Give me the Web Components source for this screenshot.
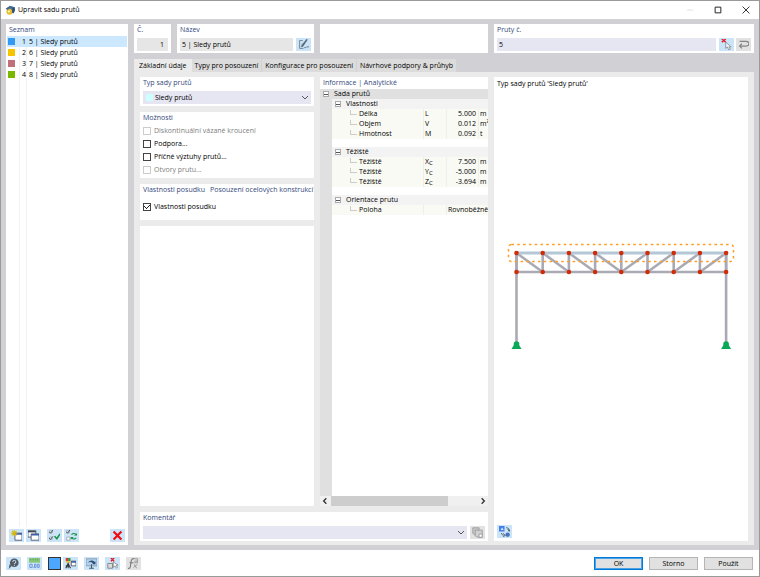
<!DOCTYPE html>
<html lang="cs">
<head>
<meta charset="utf-8">
<title>Upravit sadu prutů</title>
<style>
  body {
    margin: 0;
    font: 7px/10px "Open Sans", "Noto Sans", sans-serif;
    color: #000;
    --accent: #34497c;
    --field: #e6e6f2;
    --frame: #d0d0d5;
    --page: #ebebeb;
    --button: #cce4f7;
  }
</style>
</head>
<body>
<member-set-dialog></member-set-dialog>

<script>
const ICONS = {
  app: '<circle cx="6.500" cy="9" r="4.500" fill="#e5bd35"/><path d="M1 5l6-4 7 2v5l-2 4-2-1V7L7 5 3 7z" fill="#41698f"/><path d="M11 4l2 1-1 6-2-1z" fill="#24496d"/><circle cx="5.500" cy="9" r="1.500" fill="#fff3ad"/>',
  minimize: '<path d="M2 7h10" stroke="#c9c9c9"/>',
  maximize: '<path d="M2 2h10v10H2z" fill="none" stroke="#222" stroke-width="1.700"/>',
  close: '<path d="M1 1l12 12M13 1L1 13" stroke="#222" stroke-width="1.600"/>',
  edit: '<path d="M6 2H2v10h5" fill="none" stroke="#63727e"/><path d="M4 8l2-3M4 10h2l6-9-1-1-6 8z" fill="#506574" stroke="#506574" stroke-width=".5"/><path d="M8 11h2l1-1h3" fill="none" stroke="#506574"/>',
  pick: '<path d="M1 0l5 4M6 0L1 4" stroke="#e01b24" stroke-width="1.800"/><path d="M6 4v8l2-2 2 4 2-1-2-3h3z" fill="#f4f7fa" stroke="#777f88" stroke-width=".9"/>',
  back: '<path d="M2 3h8q4 0 4 3t-4 3H2M5 6L2 9l3 3" fill="none" stroke="#858585" stroke-width="1.500"/>',
  create: '<path d="M5 4h9v9H5z" fill="#fff" stroke="#3e4557"/><path d="M5 5h9" stroke="#3b5ca8" stroke-width="2"/><path d="M4 0v8M0 4h8M1 1l6 6M7 1L1 7" stroke="#d8b800" stroke-width="1.300"/>',
  copy: '<path d="M0 1h10v8H0z" fill="#fff" stroke="#3e4557"/><path d="M0 2h10" stroke="#3e4557" stroke-width="2"/><path d="M4 5h10v8H4z" fill="#fff" stroke="#3e4557"/><path d="M4 6h10" stroke="#3b5ca8" stroke-width="2"/>',
  checkAll: '<path d="M1 1h3v3H1zM1 9h3v3H1z" fill="#fff" stroke="#77838d" stroke-width=".7"/><path d="M0 2l2 2 3-4M0 10l2 2 3-4" fill="none" stroke="#333"/><path d="M7 8l3 3 4-6" fill="none" stroke="#159447" stroke-width="2"/>',
  invert: '<path d="M1 1h3v3H1zM1 9h4v4H1z" fill="#fff" stroke="#77838d" stroke-width=".7"/><path d="M0 2l2 2 3-4" fill="none" stroke="#333"/><path d="M7 6q3-3 6 0M13 10q-3 3-6 0" fill="none" stroke="#159447" stroke-width="1.400"/><path d="M14 4v3h-4zM6 12V9h4z" fill="#159447"/>',
  remove: '<path d="M2 2l10 10M12 2L2 12" stroke="#ef0b12" stroke-width="2.800"/>',
  pages: '<path d="M1 1h8v9H3L1 8z" fill="#c9c9c9" stroke="#929292"/><path d="M4 4h9v9H7l-3-2z" fill="#d0d0d0" stroke="#929292"/><path d="M9 9h4v4H9z" fill="#fff" stroke="#929292"/>',
  swap: '<path d="M0 0h7v7H0z" fill="#437fea"/><path d="M2 5l2-3 2 3z" fill="#d9eaff"/><circle cx="11" cy="11" r="2.800" fill="#4474bd"/><path d="M9 2q4 0 4 4M11 4l2 3 1-3M3 9q0 3 4 3M5 9l3 3-3 2" fill="none" stroke="#445466"/>',
  help: '<circle cx="8" cy="6" r="5.500" fill="#4f5a64"/><path d="M5 10l-4 4 1-6z" fill="#4f5a64"/><path d="M6 5q0-2 2-2t2 2-2 2v1M8 9v1" fill="none" stroke="#d7e7f3" stroke-width="1.200"/>',
  units: '<path d="M0 0h14v6H0z" fill="#88c979"/><path d="M2 1v2M5 1v2M8 1v2M11 1v2" stroke="#4e8849" stroke-width=".7"/><path d="M1 8h3v4H1zM7 8h2v4H7zM11 8h2v4h-2z" fill="none" stroke="#5b86d8"/><path d="M5 12h1" stroke="#5b86d8"/>',
  display: '<path d="M1 0h3v4H1z" fill="#db372e"/><path d="M4 0h3v4H4z" fill="#2d9b41"/><path d="M1 4h6v2H1z" fill="#ebc334"/><path d="M4 6v7M1 13l3-6 3 6M1 10h5" fill="none" stroke="#30363c" stroke-width="1.400"/><path d="M8 4h6v6H8z" fill="#fff" stroke="#3e4557"/><path d="M8 5h6" stroke="#3b5ca8" stroke-width="2"/>',
  view: '<path d="M0 1h14v9H0z" fill="#b4d2ea" stroke="#7d93a8"/><path d="M7 8v5M4 13h6" stroke="#42596e" stroke-width="1.300"/><path d="M2 6q5-5 9-1l1-1v4H8l1-1Q6 4 2 6z" fill="#294b75"/>',
  deselect: '<path d="M5 0l4 4M9 0L5 4" stroke="#e01b24" stroke-width="1.800"/><path d="M1 7h6v6H1z" fill="#ddd" stroke="#777"/><path d="M8 5v7l2-2 2 3 1-1-1-3h2z" fill="#fff" stroke="#777" stroke-width=".9"/>',
  formula: '<path d="M8 1Q5 0 4 4L3 11q-1 3-3 2M2 6h5" fill="none" stroke="#7b7b7b" stroke-width="1.400"/><path d="M8 1h4v5H8M8 4h4M7 12l5-4M8 8l3 5" fill="none" stroke="#8b8b8b"/>',
};

const svg = name => `<svg viewBox="0 0 14 14" aria-hidden="true">${ICONS[name]}</svg>`;
const CHEVRON = '<svg class="chevron" viewBox="0 0 8 8" aria-hidden="true"><path d="M1 2l3 3 3-3" fill="none" stroke="#555"/></svg>';

const FIELD_STYLE = `
  .row {
    display: flex;
    align-items: center;
    gap: 3px;
    height: 13px;
  }
  input, select {
    flex: 1;
    min-width: 0;
    width: 0;
    height: 13px;
    padding: 0 2px;
    border: 0;
    border-radius: 0;
    box-sizing: border-box;
    background: var(--field);
    color: inherit;
    font: inherit;
    appearance: none;
  }
  input[readonly] { background: #e6e6e6; }
  .combo {
    display: flex;
    flex: 1;
    align-items: center;
    height: 13px;
    padding: 0 2px 0 3px;
    background: var(--field);
  }
  .chevron { width: 8px; height: 8px; pointer-events: none; }
`;

function define(name, styles, markup, setup) {
  customElements.define(name, class extends HTMLElement {
    constructor() {
      super();
      this.attachShadow({ mode: 'open' });
    }

    connectedCallback() {
      const html = typeof markup === 'function' ? markup(this) : markup;
      this.shadowRoot.innerHTML = `<style>${styles}</style>${html}`;
      if (setup) setup(this.shadowRoot, this);
    }
  });
}

define('icon-button', `
  :host { display: block; flex: none; width: 15px; height: 13px; }
  button {
    display: flex;
    align-items: center;
    justify-content: center;
    width: 100%;
    height: 100%;
    padding: 0;
    border: 0;
    background: var(--button);
  }
  :host([plain]) button { background: none; }
  :host([plain]) svg { width: 8px; height: 8px; }
  button:disabled { background: #e2e2e2; }
  svg { width: 11px; height: 11px; }
`, el => `
  <button type="button" aria-label="${el.getAttribute('label')}" ${el.hasAttribute('off') ? 'disabled' : ''}>
    ${svg(el.getAttribute('icon'))}
  </button>
`);

define('panel-card', `
  :host {
    display: flex;
    flex-direction: column;
    box-sizing: border-box;
    min-width: 0;
    padding: 0 3px 2px;
    background: #fff;
  }
  .heading {
    display: flex;
    gap: 5px;
    height: 12px;
    margin-bottom: 2px;
    line-height: 12px;
    color: var(--accent);
    white-space: nowrap;
  }
`, '<div class="heading"><slot name="heading"></slot></div><slot></slot>');

define('title-bar', `
  :host { display: flex; align-items: center; height: 18px; padding: 0 6px 0 4px; background: #fff; }
  svg { width: 10px; height: 10px; }
  h1 { flex: 1; margin: 0 0 0 3px; font-size: 7px; font-weight: 400; }
  nav { display: flex; gap: 13px; }
`, `
  ${svg('app')}
  <h1><slot></slot></h1>
  <nav>
    <icon-button plain icon="minimize" label="Minimalizovat"></icon-button>
    <icon-button plain icon="maximize" label="Maximalizovat"></icon-button>
    <icon-button plain icon="close" label="Zavřít"></icon-button>
  </nav>
`);

const MEMBER_SETS = [
  ['#3399f3', 1, '5 | Sledy prutů'],
  ['#f7c400', 2, '6 | Sledy prutů'],
  ['#c07078', 3, '7 | Sledy prutů'],
  ['#7ab800', 4, '8 | Sledy prutů'],
];

define('member-set-list', `
  :host { display: flex; flex-direction: column; padding: 0 0 3px; background: #fff; }
  h2 { margin: 0; padding-left: 3px; font-size: 7px; line-height: 12px; font-weight: 400; color: var(--accent); }
  ul {
    flex: 1;
    margin: 0 1px;
    padding: 0;
    list-style: none;
    background: linear-gradient(90deg, #0000 12px, #f2f2f2 12px 13px, #0000 13px 19px, #f2f2f2 19px 20px, #0000 20px);
  }
  li { display: flex; align-items: center; height: 11px; padding-left: 1px; white-space: nowrap; }
  li.selected { background: #cce8ff; }
  i { width: 7px; height: 7px; }
  .number { width: 11px; text-align: right; }
  .name { margin-left: 3px; }
  footer { display: flex; gap: 2px; padding: 2px 3px 0; }
  .gap { width: 2px; }
  .spacer { flex: 1; }
`, `
  <h2>Seznam</h2>
  <ul>${MEMBER_SETS.map(([color, number, name], i) => `
    <li class="${i === 0 ? 'selected' : ''}">
      <i style="background:${color}"></i><span class="number">${number}</span><span class="name">${name}</span>
    </li>`).join('')}
  </ul>
  <footer>
    <icon-button icon="create" label="Nová"></icon-button>
    <icon-button icon="copy" label="Kopírovat"></icon-button>
    <span class="gap"></span>
    <icon-button icon="checkAll" label="Vybrat vše"></icon-button>
    <icon-button icon="invert" label="Invertovat výběr"></icon-button>
    <span class="spacer"></span>
    <icon-button icon="remove" label="Smazat"></icon-button>
  </footer>
`);

define('set-header', `
  :host { display: grid; grid-template-columns: 37px 137px 168px minmax(0, 1fr); gap: 6px; height: 29px; }
  #number { text-align: right; padding-right: 4px; }
  .actions { display: flex; gap: 2px; }
  ${FIELD_STYLE}
`, `
  <panel-card>
    <label slot="heading" for="number">Č.</label>
    <div class="row"><input id="number" value="1" readonly></div>
  </panel-card>
  <panel-card>
    <label slot="heading" for="name">Název</label>
    <div class="row">
      <input id="name" value="5 | Sledy prutů" readonly>
      <icon-button icon="edit" label="Upravit název"></icon-button>
    </div>
  </panel-card>
  <panel-card></panel-card>
  <panel-card>
    <label slot="heading" for="members">Pruty č.</label>
    <div class="row">
      <input id="members" value="5">
      <div class="actions">
        <icon-button icon="pick" label="Vybrat pruty"></icon-button>
        <icon-button off icon="back" label="Obrátit orientaci"></icon-button>
      </div>
    </div>
  </panel-card>
`);

define('tab-strip', `
  :host { display: flex; height: 13px; }
  button {
    padding: 0 3px;
    border: 0;
    border-right: 1px solid #d2d2d4;
    background: #dcdcdc;
    color: inherit;
    font: inherit;
    white-space: nowrap;
  }
  button[aria-selected="true"] { border: 0; padding: 0 5px; background: var(--page); }
`, `
  <button type="button" role="tab" aria-selected="true">Základní údaje</button>
  <button type="button" role="tab" aria-selected="false">Typy pro posouzení</button>
  <button type="button" role="tab" aria-selected="false">Konfigurace pro posouzení</button>
  <button type="button" role="tab" aria-selected="false">Návrhové podpory &amp; průhyb</button>
`, root => {
  const tabs = root.querySelectorAll('button');
  tabs.forEach(tab => tab.addEventListener('click', () => {
    tabs.forEach(t => t.setAttribute('aria-selected', t === tab));
  }));
});

define('check-option', `
  :host { display: block; height: 13px; }
  label { display: flex; align-items: center; gap: 3px; height: 13px; white-space: nowrap; }
  input {
    flex: none;
    width: 8px;
    height: 8px;
    margin: 0;
    border: 1px solid #444;
    box-sizing: border-box;
    background: #fff;
    appearance: none;
  }
  input:checked {
    background:
      linear-gradient(45deg, #0000 45%, #222 45% 60%, #0000 60%) 0 2px / 3px 3px no-repeat,
      linear-gradient(-45deg, #0000 42%, #222 42% 62%, #0000 62%) 2px 1px / 4px 4px no-repeat;
  }
  :host([off]) { color: #808080; }
  :host([off]) input { border-color: #ccc; }
`, el => `
  <label>
    <input type="checkbox" ${el.hasAttribute('on') ? 'checked' : ''} ${el.hasAttribute('off') ? 'disabled' : ''}>
    <span><slot></slot></span>
  </label>
`);

define('basic-options', `
  :host { display: flex; flex-direction: column; gap: 6px; min-width: 0; }
  .swatch { width: 7px; height: 7px; background: #ccffff; }
  .options { height: 66px; }
  .options .list { margin-top: -2px; }
  .design { height: 36px; }
  .design check-option { margin-top: 2px; }
  .rest { flex: 1; }
  ${FIELD_STYLE}
`, `
  <panel-card>
    <label slot="heading" for="type">Typ sady prutů</label>
    <div class="combo">
      <span class="swatch"></span>
      <select id="type"><option>Sledy prutů</option></select>
      ${CHEVRON}
    </div>
  </panel-card>
  <panel-card class="options">
    <span slot="heading">Možnosti</span>
    <div class="list">
      <check-option off>Diskontinuální vázané kroucení</check-option>
      <check-option>Podpora...</check-option>
      <check-option>Příčné výztuhy prutů...</check-option>
      <check-option off>Otvory prutu...</check-option>
    </div>
  </panel-card>
  <panel-card class="design">
    <span slot="heading">Vlastnosti posudku</span>
    <span slot="heading">Posouzení ocelových konstrukcí</span>
    <check-option on>Vlastnosti posudku</check-option>
  </panel-card>
  <panel-card class="rest"></panel-card>
`);

const PROPERTIES = [
  { name: 'Vlastnosti', items: [['Délka', 'L', '5.000', 'm'], ['Objem', 'V', '0.012', 'm³'], ['Hmotnost', 'M', '0.092', 't']] },
  { name: 'Těžiště', items: [['Těžiště', 'X<small>C</small>', '7.500', 'm'], ['Těžiště', 'Y<small>C</small>', '-5.000', 'm'], ['Těžiště', 'Z<small>C</small>', '-3.694', 'm']] },
  { name: 'Orientace prutu', items: [['Poloha', '', 'Rovnoběžně']] },
];

function itemRow([name, symbol, value, unit]) {
  const cells = unit ? `<td class="value">${value}</td><td>${unit}</td>` : `<td colspan="2">${value}</td>`;
  return `<tr class="item"><td class="gutter"></td><td class="name"><i></i>${name}</td><td>${symbol}</td>${cells}</tr>`;
}

define('property-tree', `
  :host { display: flex; flex-direction: column; min-width: 0; background: #fff; overflow: hidden; }
  h2 { margin: 0; padding-left: 3px; font-size: 7px; line-height: 12px; font-weight: 400; color: var(--accent); }
  .body { flex: 1; background: linear-gradient(90deg, #e0e0e0 12px, #0000 12px); }
  table { width: 100%; table-layout: fixed; border-collapse: collapse; }
  .c-gutter { width: 12px; }
  .c-symbol { width: 23px; }
  .c-value { width: 32px; }
  .c-unit { width: 10px; }
  td, th {
    height: 10px;
    padding: 0 0 0 2px;
    line-height: 10px;
    font-weight: 400;
    text-align: left;
    white-space: nowrap;
    box-sizing: border-box;
  }
  td { box-shadow: inset 1px 0 #efefea; }
  .gutter, .name { box-shadow: none; }
  .root th { padding-left: 3px; background: #e0e0e0; }
  .group th { padding-left: 3px; background: #f3f3f3; }
  .item td { background: #f9faf4; }
  .item .gutter, .group .gutter { background: #e0e0e0; }
  .name i {
    display: inline-block;
    width: 7px;
    height: 5px;
    margin: 0 2px 0 16px;
    border: solid #ccc;
    border-width: 0 0 1px 1px;
    box-sizing: border-box;
    vertical-align: 1px;
  }
  .value { text-align: right; padding: 0 2px 0 0; }
  .blank td { height: 8px; box-shadow: none; }
  small { font-size: 6px; vertical-align: -1px; line-height: 1px; }
  .toggle {
    width: 6px;
    height: 6px;
    margin: 0 5px 0 0;
    padding: 0;
    border: 1px solid #aaa;
    box-sizing: border-box;
    background: linear-gradient(#555, #555) center / 4px 1px no-repeat #fff;
    vertical-align: 0;
  }
  .scroll {
    display: flex;
    align-items: center;
    justify-content: space-between;
    height: 10px;
    padding: 0 1px;
    background: #f0f0f0;
  }
  .scroll svg { width: 8px; height: 8px; }
  .track { flex: 1; height: 10px; margin: 0 2px; }
  .thumb { width: 80%; height: 10px; background: #cdcdcd; }
`, `
  <h2>Informace | Analytické</h2>
  <div class="body">
    <table>
      <colgroup><col class="c-gutter"><col><col class="c-symbol"><col class="c-value"><col class="c-unit"></colgroup>
      <tr class="root"><th colspan="5"><button type="button" class="toggle" aria-label="Sbalit"></button>Sada prutů</th></tr>
      ${PROPERTIES.map(group => `
        <tr class="group">
          <td class="gutter"></td>
          <th colspan="4"><button type="button" class="toggle" aria-label="Sbalit"></button>${group.name}</th>
        </tr>
        ${group.items.map(itemRow).join('')}
      `).join('<tr class="blank"><td colspan="5"></td></tr>')}
    </table>
  </div>
  <div class="scroll">
    <svg viewBox="0 0 6 6" aria-hidden="true"><path d="M4 1L2 3l2 2" fill="none" stroke="#333"/></svg>
    <div class="track"><div class="thumb"></div></div>
    <svg viewBox="0 0 6 6" aria-hidden="true"><path d="M2 1l2 2-2 2" fill="none" stroke="#333"/></svg>
  </div>
`);

define('comment-box', `
  :host { display: block; }
  ${FIELD_STYLE}
`, `
  <panel-card>
    <label slot="heading" for="comment">Komentář</label>
    <div class="row">
      <div class="combo"><input id="comment">${CHEVRON}</div>
      <icon-button off icon="pages" label="Převzít komentář"></icon-button>
    </div>
  </panel-card>
`);

// Truss frame: nodes are evenly spaced, diagonals lean towards midspan.
function trussMarkup() {
  const left = 22.5, step = 26.2, top = 163, bottom = 182, base = 252;
  const x = i => left + i * step;
  const line = (x1, y1, x2, y2) => `<line x1="${x1}" y1="${y1}" x2="${x2}" y2="${y2}"/>`;
  let bars = line(x(0), bottom, x(8), bottom) + line(x(0), top, x(0), base) + line(x(8), top, x(8), base);
  let nodes = '';
  for (let i = 0; i <= 8; i++) {
    bars += line(x(i), top, x(i), bottom);
    if (i < 4) bars += line(x(i), top, x(i + 1), bottom);
    else if (i < 8) bars += line(x(i), bottom, x(i + 1), top);
    nodes += `<circle cx="${x(i)}" cy="${top}" r="2.300"/><circle cx="${x(i)}" cy="${bottom}" r="2.300"/>`;
  }
  const support = i => `<circle cx="${x(i)}" cy="${base + 2}" r="2.800"/><path d="M${x(i) - 2} ${base + 2}h4l3 5h-10z"/>`;
  return `
    <g stroke="#aaaab5" stroke-width="2.600">${bars}</g>
    <line x1="${x(0)}" y1="${top}" x2="${x(8)}" y2="${top}" stroke="#b3c7d6" stroke-width="3"/>
    <rect x="14.500" y="154.500" width="225" height="17" rx="3" fill="none" stroke="#ff9d1e" stroke-width="1.500" stroke-dasharray="2.500 3.300"/>
    <g fill="#d02c08">${nodes}</g>
    <g fill="#0ba858">${support(0)}${support(8)}</g>`;
}

define('set-preview', `
  :host { display: flex; flex-direction: column; min-width: 0; padding: 0 3px 3px; box-sizing: border-box; background: #fff; }
  p { margin: 0; line-height: 13px; }
  .drawing { flex: 1; min-height: 0; margin: 0 -3px; width: calc(100% + 6px); }
`, `
  <p>Typ sady prutů 'Sledy prutů'</p>
  <svg class="drawing" viewBox="0 0 254 435" role="img" aria-label="Sledy prutů">${trussMarkup()}</svg>
  <icon-button icon="swap" label="Přepnout zobrazení"></icon-button>
`);

define('dialog-footer', `
  :host { display: flex; align-items: center; gap: 6px; height: 26px; padding: 0 6px 0 5px; background: #fff; }
  .spacer { flex: 1; }
  .display { display: flex; gap: 2px; }
  .color { width: 13px; height: 13px; padding: 0; border: 1px solid #333; background: #4da6ff; }
  .push {
    width: 49px;
    height: 13px;
    padding: 0;
    border: 1px solid #b5b5b5;
    background: #e1e1e1;
    color: inherit;
    font: inherit;
    line-height: 9px;
  }
  .default { border-color: #0078d7; outline: 1px solid #4ba3e6; outline-offset: -2px; }
`, `
  <icon-button icon="help" label="Nápověda"></icon-button>
  <icon-button icon="units" label="Jednotky"></icon-button>
  <div class="display">
    <button type="button" class="color" aria-label="Barva"></button>
    <icon-button icon="display" label="Zobrazení"></icon-button>
  </div>
  <icon-button icon="view" label="Pohled"></icon-button>
  <icon-button icon="deselect" label="Zrušit výběr"></icon-button>
  <icon-button off icon="formula" label="Vzorec"></icon-button>
  <span class="spacer"></span>
  <button type="button" class="push default">OK</button>
  <button type="button" class="push">Storno</button>
  <button type="button" class="push">Použít</button>
`);

define('member-set-dialog', `
  :host {
    display: flex;
    flex-direction: column;
    min-height: 100vh;
    box-sizing: border-box;
    border: 1px solid #999;
  }
  main { display: flex; flex: 1; gap: 6px; padding: 5px; background: var(--frame); }
  member-set-list { width: 122px; }
  .right { display: flex; flex: 1; flex-direction: column; min-width: 0; }
  tab-strip { margin-top: 6px; }
  .page {
    display: grid;
    flex: 1;
    grid-template: minmax(0, 1fr) auto / 174px 168px minmax(0, 1fr);
    gap: 6px;
    padding: 5px 6px 4px;
    background: var(--page);
  }
  comment-box { grid-area: 2 / 1 / 3 / 3; }
  set-preview { grid-area: 1 / 3 / 3 / 4; }
`, `
  <title-bar>Upravit sadu prutů</title-bar>
  <main>
    <member-set-list></member-set-list>
    <div class="right">
      <set-header></set-header>
      <tab-strip role="tablist"></tab-strip>
      <div class="page">
        <basic-options></basic-options>
        <property-tree></property-tree>
        <set-preview></set-preview>
        <comment-box></comment-box>
      </div>
    </div>
  </main>
  <dialog-footer></dialog-footer>
`);
</script>
</body>
</html>
